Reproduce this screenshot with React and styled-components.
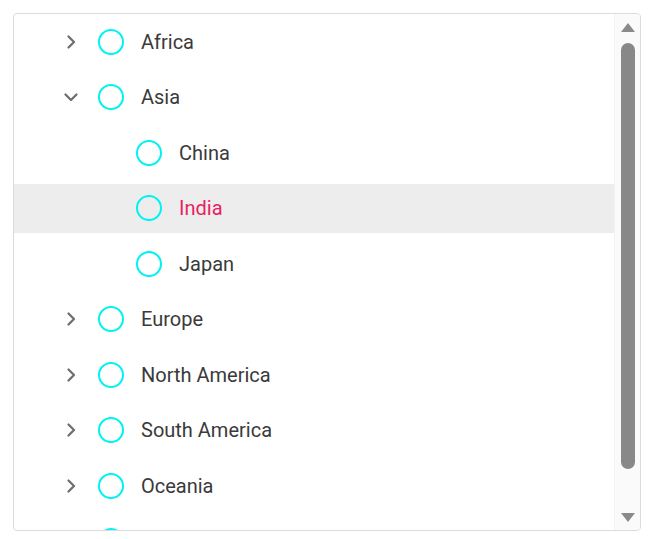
import React from 'react'
import styled, { createGlobalStyle } from 'styled-components'

const Global = createGlobalStyle`
  html, body {
    margin: 0;
    background: #fff;
    font-family: Roboto, "Noto Sans", sans-serif;
  }
`

const Frame = styled.div`
  margin: 13px 0 0 13px;
  width: 626px;
  height: 516px;
  border: 1px solid #dcdcdc;
  border-radius: 4px;
  display: flex;
  overflow: hidden;
`

const List = styled.ul`
  flex: 1;
  margin: 0;
  padding: 0;
  list-style: none;
  overflow: hidden;
`

const Item = styled.li`
  padding: 3px 0;
`

const Row = styled.div`
  height: 49.5px;
  display: flex;
  align-items: center;
  padding-left: ${p => 45 + p.level * 38}px;
  background: ${p => (p.selected ? '#ededed' : 'transparent')};
`

const Toggle = styled.span`
  width: 24px;
  height: 24px;
  display: flex;
  align-items: center;
  justify-content: center;
  color: #6f6f6f;
  margin-right: 15px;
`

const Dot = styled.span`
  width: 22px;
  height: 22px;
  border: 2.5px solid #00f2f2;
  border-radius: 50%;
  flex-shrink: 0;
  margin-right: 17px;
`

const Label = styled.span`
  font-size: 20px;
  color: ${p => (p.selected ? '#e91e63' : '#3a3a3a')};
`

const Scrollbar = styled.div`
  width: 25px;
  background: #fafafa;
  border-left: 1px solid #f3f3f3;
  display: flex;
  flex-direction: column;
  align-items: center;
`

const Arrow = styled.span`
  height: 27px;
  display: flex;
  align-items: center;
  justify-content: center;
  color: #8a8a8a;
`

const Thumb = styled.div`
  width: 14px;
  height: 426px;
  margin-top: 2px;
  border-radius: 7px;
  background: #888;
`

const Spacer = styled.div`
  flex: 1;
`

const ChevronRight = () => (
  <svg width="16" height="16" viewBox="0 0 16 16" fill="none" stroke="currentColor" strokeWidth="2.3" strokeLinecap="round" strokeLinejoin="round">
    <path d="M5.5 2.5 L11 8 L5.5 13.5" />
  </svg>
)

const ChevronDown = () => (
  <svg width="16" height="16" viewBox="0 0 16 16" fill="none" stroke="currentColor" strokeWidth="2.3" strokeLinecap="round" strokeLinejoin="round">
    <path d="M2.5 5.5 L8 11 L13.5 5.5" />
  </svg>
)

const Triangle = ({ down }) => (
  <svg width="14" height="10" viewBox="0 0 14 10" fill="currentColor">
    {down ? <path d="M0 1 L14 1 L7 10 Z" /> : <path d="M0 9 L14 9 L7 0 Z" />}
  </svg>
)

const rows = [
  { label: 'Africa', level: 0, toggle: 'closed' },
  { label: 'Asia', level: 0, toggle: 'open' },
  { label: 'China', level: 1 },
  { label: 'India', level: 1, selected: true },
  { label: 'Japan', level: 1 },
  { label: 'Europe', level: 0, toggle: 'closed' },
  { label: 'North America', level: 0, toggle: 'closed' },
  { label: 'South America', level: 0, toggle: 'closed' },
  { label: 'Oceania', level: 0, toggle: 'closed' },
  { label: 'Antarctica', level: 0, toggle: 'closed' },
]

export default function App() {
  return (
    <>
      <Global />
      <Frame>
        <List>
          {rows.map(r => (
            <Item key={r.label}>
              <Row level={r.level} selected={r.selected}>
                <Toggle>
                  {r.toggle === 'closed' && <ChevronRight />}
                  {r.toggle === 'open' && <ChevronDown />}
                </Toggle>
                <Dot />
                <Label selected={r.selected}>{r.label}</Label>
              </Row>
            </Item>
          ))}
        </List>
        <Scrollbar>
          <Arrow><Triangle /></Arrow>
          <Thumb />
          <Spacer />
          <Arrow><Triangle down /></Arrow>
        </Scrollbar>
      </Frame>
    </>
  )
}
